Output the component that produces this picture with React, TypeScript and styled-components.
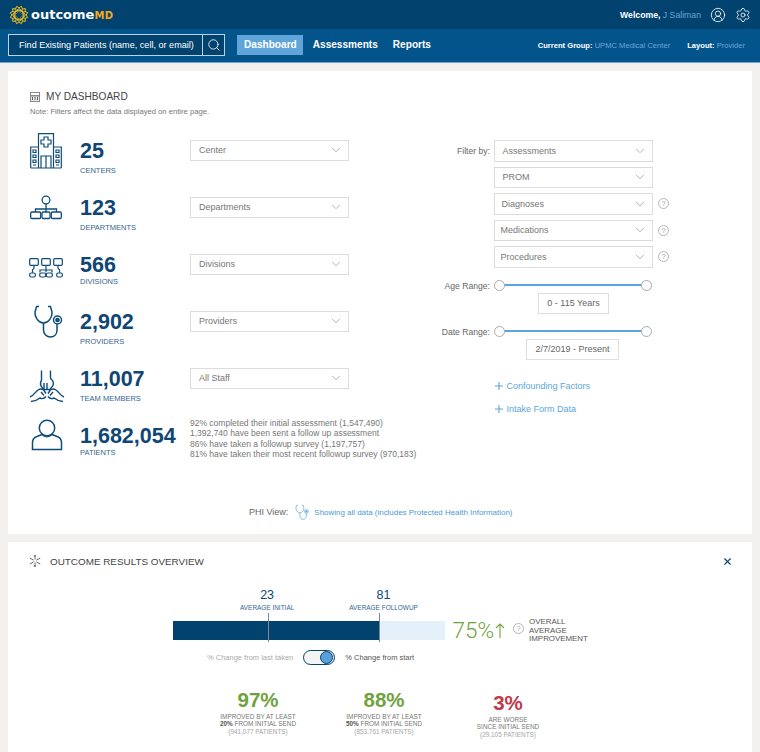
import React from 'react'
import styled, { createGlobalStyle } from 'styled-components'
import { ChevronDown, CircleUserRound, Search, Settings, X } from 'lucide-react'

const Global = createGlobalStyle`
	html, body {
		margin: 0;
		height: 752px;
		overflow: hidden;
		background: #f2f1ef;
		font-family: "Liberation Sans", Arial, sans-serif;
	}
	* { box-sizing: border-box; }
`

const TopBar = styled.header`
	height: 29px;
	background: #01426f;
	display: flex;
	align-items: center;
	justify-content: space-between;
	padding: 0 9px;
	color: #fff;
`
const Logo = styled.div`
	display: flex;
	align-items: center;
	gap: 2px;
`
const LogoWord = styled.span`
	font-family: "DejaVu Sans", sans-serif;
	font-weight: 700;
	font-size: 13px;
	color: #fff;
`
const LogoMd = styled.span`
	color: #f3a81d;
	font-size: 10px;
	letter-spacing: 0.4px;
`
const Account = styled.div`
	display: flex;
	align-items: center;
	font-size: 8.7px;
	font-weight: 700;
	svg { margin-left: 9px; }
`
const Accent = styled.span`
	color: #6ba6d6;
	font-weight: 400;
`
const NavBar = styled.nav`
	height: 34px;
	background: #04548c;
	border-bottom: 1px solid #6ba6d6;
	display: flex;
	align-items: center;
	padding: 0 15px 1px 8px;
	color: #fff;
`
const SearchBox = styled.div`
	width: 217px;
	height: 22px;
	border: 1px solid #b9d2e6;
	background: #01426f;
	display: flex;
	align-items: center;
	justify-content: space-between;
	padding-left: 10px;
	font-size: 9.1px;
`
const SearchButton = styled.span`
	width: 22px;
	height: 20px;
	border-left: 1px solid #b9d2e6;
	display: flex;
	align-items: center;
	justify-content: center;
`
const NavLinks = styled.div`
	display: flex;
	align-items: center;
	margin-left: 12px;
`
const NavLink = styled.a<{ $active?: boolean }>`
	height: 20px;
	line-height: 20px;
	padding: 0 ${p => (p.$active ? 6 : 7)}px 0 7px;
	margin-right: ${p => (p.$active ? 3 : 1)}px;
	font-size: 10.1px;
	font-weight: 700;
	color: #fff;
	background: ${p => (p.$active ? '#5fa5d9' : 'transparent')};
`
const Context = styled.div`
	margin-left: auto;
	display: flex;
	gap: 17px;
	font-size: 7.6px;
	font-weight: 700;
`

const Page = styled.main`
	padding: 8px 8px 0;
	display: flex;
	flex-direction: column;
	gap: 8px;
`
const Card = styled.section`
	background: #fff;
	height: ${(p: { $height: number }) => p.$height}px;
`
const Dashboard = styled(Card)`
	padding: 19px 22px 0;
`
const Title = styled.h2`
	margin: 0;
	display: flex;
	align-items: center;
	gap: 6px;
	font-size: 10.1px;
	font-weight: 400;
	height: 13px;
	color: #444;
`
const Note = styled.p`
	margin: 4px 0 0;
	font-size: 7.65px;
	line-height: 9px;
	color: #777;
`
const Columns = styled.div`
	margin-top: 17px;
	display: flex;
`
const Stats = styled.div`
	width: 402px;
	display: grid;
	grid-auto-rows: 57px;
`
const StatRow = styled.div`
	display: grid;
	grid-template-columns: 50px 110px 1fr;
`
const StatIcon = styled.div<{ $shift?: number }>`
	color: #0f4c7a;
	display: flex;
	padding-left: ${p => p.$shift ?? 0}px;
`
const StatBlock = styled.div`
	padding-top: 7px;
`
const StatNumber = styled.div`
	font-size: 21.5px;
	line-height: 22px;
	font-weight: 700;
	color: #0f4673;
`
const StatLabel = styled.div<{ $tight?: boolean }>`
	font-size: 7.5px;
	line-height: 9px;
	margin-top: ${p => (p.$tight ? 1 : 3.5)}px;
	color: #33668f;
`
const SelectBox = styled.div<{ $inset?: number }>`
	width: 159px;
	height: 21.5px;
	background: #fff;
	border: 1px solid #dcdcdc;
	display: flex;
	align-items: center;
	justify-content: space-between;
	padding: 0 5px 0 ${p => p.$inset ?? 8}px;
	font-size: 9px;
	color: #777;
	svg { color: #777; }
`
const StatSelect = styled(SelectBox)`
	margin-top: 6.5px;
`
const Completion = styled.ul`
	list-style: none;
	margin: 0;
	padding: 0;
	font-size: 8.5px;
	line-height: 10.3px;
	color: #777;
`
const Filters = styled.div`
	flex: 1;
	padding-top: 7px;
`
const FilterRow = styled.div`
	display: flex;
	align-items: center;
	height: 21.5px;
	margin-bottom: 5px;
`
const FieldLabel = styled.div`
	width: 61.5px;
	text-align: right;
	padding-right: 3.5px;
	font-size: 8.6px;
	color: #666;
`
const Help = styled.span`
	display: inline-flex;
	align-items: center;
	justify-content: center;
	flex: none;
	width: 11px;
	height: 11px;
	border: 1px solid #b5b5b5;
	border-radius: 50%;
	font-size: 7.5px;
	color: #a5a5a5;
`
const FilterHelp = styled(Help)`
	margin-left: 5.5px;
`
const RangeRow = styled.div<{ $top: number }>`
	display: flex;
	align-items: flex-start;
	margin-top: ${p => p.$top}px;
`
const RangeLabel = styled(FieldLabel)`
	line-height: 12px;
`
const RangeBody = styled.div`
	width: 158px;
	display: flex;
	flex-direction: column;
	align-items: center;
`
const Track = styled.div`
	position: relative;
	width: 100%;
	height: 11px;
	&::before {
		content: '';
		position: absolute;
		left: 4px;
		right: 4px;
		top: 4.5px;
		height: 2px;
		background: #5aa6dc;
	}
`
const Handle = styled.span<{ $side: 'left' | 'right' }>`
	position: absolute;
	top: 0;
	${p => p.$side}: 0;
	width: 11px;
	height: 11px;
	background: #fff;
	border: 1px solid #aaa;
	border-radius: 50%;
`
const RangeValue = styled.div<{ $pad: number; $nudge?: number }>`
	margin: 2px 0 0 ${p => p.$nudge ?? 0}px;
	height: 21px;
	line-height: 19px;
	padding: 0 ${p => p.$pad}px;
	border: 1px solid #dedede;
	font-size: 9px;
	color: #666;
`
const PlusLink = styled.a<{ $top: number }>`
	display: flex;
	align-items: center;
	gap: 4px;
	margin: ${p => p.$top}px 0 0 62.5px;
	height: 12px;
	font-size: 9px;
	color: #5aa6dc;
`
const PhiRow = styled.div`
	margin: 28px 0 0 219px;
	display: flex;
	align-items: center;
	height: 18px;
	font-size: 9px;
	color: #666;
`
const PhiIcon = styled.span`
	display: flex;
	margin: 0 5px 0 7px;
	color: #5aa6dc;
`
const PhiLink = styled.a`
	font-size: 7.95px;
	color: #4c9ad6;
`

const Overview = styled(Card)`
	padding: 12px 0 0;
`
const OverviewHead = styled.div`
	display: flex;
	align-items: center;
	justify-content: space-between;
	height: 14px;
	padding: 0 19px 0 21px;
`
const OverviewTitle = styled.h2`
	margin: 0;
	display: flex;
	align-items: center;
	gap: 9px;
	font-size: 9.9px;
	font-weight: 400;
	color: #444;
`
const Markers = styled.div`
	margin: 20px 0 0 232px;
	display: flex;
	gap: 55px;
`
const Marker = styled.div`
	text-align: center;
	color: #0f4673;
`
const MarkerValue = styled.div`
	font-size: 12.5px;
	line-height: 15px;
`
const MarkerLabel = styled.div`
	font-size: 6.45px;
	line-height: 8px;
	color: #33668f;
	margin-top: 1px;
`
const BarRow = styled.div`
	margin: 4px 0 0 165px;
	display: flex;
	align-items: center;
`
const Bar = styled.div`
	position: relative;
	width: 272px;
	height: 19px;
	background: #e4f0fa;
`
const BarFill = styled.div`
	height: 100%;
	background: #01426f;
`
const Tick = styled.span`
	position: absolute;
	top: -8px;
	width: 1px;
	height: 29px;
	background: #7a8b98;
`
const Improvement = styled.div`
	display: flex;
	align-items: center;
	margin-left: 7.5px;
	font-family: Roboto, "Liberation Sans", sans-serif;
	font-weight: 300;
	font-size: 22.5px;
	color: #6fa23c;
`
const ImprovementHelp = styled(Help)`
	margin: 0 5px 3px 8px;
	font-family: "Liberation Sans", sans-serif;
`
const ImprovementLabel = styled.div`
	font-family: "Liberation Sans", sans-serif;
	font-weight: 400;
	font-size: 7.9px;
	line-height: 8.7px;
	margin-top: 2px;
	color: #555;
`
const ToggleRow = styled.div`
	margin: 5.5px 0 0 199px;
	display: flex;
	align-items: center;
	font-size: 7.5px;
	color: #aaa;
`
const Toggle = styled.span`
	position: relative;
	width: 32px;
	height: 15px;
	margin: 0 10px 0 10px;
	background: #f4f4f4;
	border: 1px solid #01426f;
	border-radius: 8px;
`
const Knob = styled.span`
	position: absolute;
	right: 1px;
	top: 0;
	width: 13px;
	height: 13px;
	background: #5aa0d8;
	border: 1px solid #01426f;
	border-radius: 50%;
`
const ToggleOn = styled.span`
	color: #555;
`
const Results = styled.div`
	margin: 24px 0 0 187px;
	display: grid;
	grid-template-columns: 126px 126px 122px;
`
const Result = styled.div<{ $drop?: number }>`
	text-align: center;
	padding-top: ${p => p.$drop ?? 0}px;
	font-size: 6.4px;
	line-height: 7.8px;
	color: #777;
	b { color: #555; }
`
const ResultValue = styled.div<{ $tone: 'good' | 'bad' }>`
	font-size: 20.5px;
	line-height: 22px;
	font-weight: 700;
	margin-bottom: 2px;
	color: ${p => (p.$tone === 'good' ? '#6fa23c' : '#bf3a4a')};
`
const ResultCount = styled.div`
	color: #a5a5a5;
`

const Sunburst = () => (
	<svg width="20" height="20" viewBox="-10 -10 20 20">
		{Array.from({ length: 12 }, (_, i) => {
			const a = (i * Math.PI) / 6
			const b = a + Math.PI / 12
			return (
				<g key={i} stroke="#f5c21f" strokeWidth="1" fill="#f5c21f">
					<line x1={Math.cos(a) * 3} y1={Math.sin(a) * 3} x2={Math.cos(a) * 7} y2={Math.sin(a) * 7} />
					<line x1={Math.cos(a) * 7} y1={Math.sin(a) * 7} x2={Math.cos(b) * 9} y2={Math.sin(b) * 9} />
					<line x1={Math.cos(a) * 7} y1={Math.sin(a) * 7} x2={Math.cos(a - Math.PI / 12) * 9} y2={Math.sin(a - Math.PI / 12) * 9} />
					<circle cx={Math.cos(b) * 5} cy={Math.sin(b) * 5} r="0.6" />
				</g>
			)
		})}
	</svg>
)

const DashIcon = () => (
	<svg width="10" height="10" viewBox="0 0 10 10">
		<rect width="10" height="10" fill="#8a8a8a" />
		<rect x="1" y="1" width="8" height="2" fill="#fff" />
		<rect x="1" y="4.500" width="8" height="4.500" fill="#e8e8e8" />
		<path d="M2 5h1v3H2zM4.500 5h1v3h-1zM7 5h1v3H7z" fill="#666" />
	</svg>
)

const Hospital = () => (
	<svg width="32" height="36" viewBox="0 0 32 36" fill="none" stroke="currentColor" strokeWidth="1.2">
		<path d="M8.500 35V.7h15V35M.7 35V14h7.800M31.300 35V14h-7.800M.7 35h30.600" />
		<path d="M14 4h4v3h3v4h-3v3h-4v-3h-3V7h3z" />
		<path d="M11 35V23h10v12M16 23v12" />
		<path d="M3 17h3v2.500H3zM3 22h3v2.500H3zM3 27h3v2.500H3zM26 17h3v2.500h-3zM26 22h3v2.500h-3zM26 27h3v2.500h-3zM3 32h3M26 32h3" />
	</svg>
)

const OrgChart = () => (
	<svg width="32" height="26" viewBox="0 0 32 26" fill="none" stroke="currentColor" strokeWidth="1.3" style={{ marginTop: 5 }}>
		<circle cx="16" cy="5" r="3.900" />
		<path d="M16 9v5M5.500 17v-3h21v3M16 14v3" />
		<rect x=".7" y="17" width="10" height="6.500" rx="1.200" />
		<rect x="12" y="17" width="8" height="6.500" rx="1.200" />
		<rect x="21.300" y="17" width="10" height="6.500" rx="1.200" />
	</svg>
)

const DivisionChart = () => (
	<svg width="34" height="20" viewBox="0 0 34 20" fill="none" stroke="currentColor" strokeWidth="1.2" style={{ margin: '11px 0 0 -1px' }}>
		<rect x=".7" y=".7" width="8.600" height="6.600" rx="1" />
		<rect x="12.700" y=".7" width="8.600" height="6.600" rx="1" />
		<rect x="24.700" y=".7" width="8.600" height="6.600" rx="1" />
		<path d="M5 7.300v3l-1.500 1.500v3M17 7.300v7M11 14.500v-2.500h12v2.500M29 7.300v3l1.500 1.500v3" />
		<rect x=".7" y="15" width="5.600" height="4" rx="1.500" />
		<rect x="10.700" y="15" width="6" height="4" rx="1.500" />
		<rect x="17.300" y="15" width="6" height="4" rx="1.500" />
		<rect x="27.700" y="15" width="5.600" height="4" rx="1.500" />
	</svg>
)

const Stethoscope = ({ size = 30 }: { size?: number }) => (
	<svg width={size} height={(size * 34) / 30} viewBox="0 0 30 34" fill="none" stroke="currentColor" strokeWidth="1.5" style={{ flex: 'none' }}>
		<path d="M6 2.500H3.600L2 8c-.6 5 3.500 11 8.500 11s9-6 8.500-11l-1.600-5.500H15" />
		<path d="M10.500 19v7c0 4 3 7 7 7s6.500-3 6.500-7v-6" />
		<circle cx="24.500" cy="16" r="4" />
		<circle cx="24.500" cy="16" r="1.600" fill="currentColor" />
	</svg>
)

const Hands = () => (
	<svg width="36" height="33" viewBox="0 0 36 33" fill="none" stroke="currentColor" strokeWidth="1.4" style={{ margin: '9px 0 0 -1px' }}>
		<path d="M12.500 .5V10c-1 2-1.500 4-.5 6l2.500 3.500h6.500l3-4c.8-2.500 0-5-2-6.500l-.5-1V.5" />
		<path d="M15 13v6M18 13v6.500" />
		<path d="M1 27c3.500-1 5-5 8-7 2-1.200 4.500-1 6 .5l2 3" />
		<path d="M35 27c-3.500-1-5-5-8-7-2-1.200-4.500-1-6 .5l-2 3" />
		<path d="M2 31.500c4-.2 6.500-1.500 9-3.500 2 1 4.500.5 6-1.500M34 31.500c-4-.2-6.500-1.500-9-3.500-2 1-4.500.5-6-1.500" />
		<path d="M12 22l3 3.500M21 25.500l3-3.500" />
	</svg>
)

const Person = () => (
	<svg width="32" height="32" viewBox="0 0 32 32" fill="none" stroke="currentColor" strokeWidth="1.500" style={{ marginLeft: 1, marginTop: 1 }}>
		<circle cx="16" cy="9" r="7.700" />
		<path d="M11 15.500 6 17.500c-3 1-4.500 3.500-4.500 6v7h29v-7c0-2.500-1.500-5-4.500-6l-5-2c-3 3-7 3-10 0z" />
	</svg>
)

const Asterisk = () => (
	<svg width="12" height="12" viewBox="0 0 12 12" fill="none" stroke="#666" strokeWidth="1">
		<path d="M6 0v4.500M6 7.500V12M.8 3l3.900 2.200M7.300 6.800 11.200 9M.8 9l3.900-2.200M7.300 5.200 11.200 3" />
		<path d="M4.800 1h2.400M4.800 11h2.400" />
	</svg>
)

const Plus = () => (
	<svg width="8" height="8" viewBox="0 0 8 8" stroke="#5aa6dc" strokeWidth="1.100">
		<path d="M4 0v8M0 4h8" />
	</svg>
)

const UpArrow = () => (
	<svg width="10" height="15" viewBox="0 0 10 15" fill="none" stroke="#6fa23c" strokeWidth="1.100" style={{ marginLeft: 1 }}>
		<path d="M5 15V1M1 5l4-4 4 4" />
	</svg>
)

const stats = [
	{ icon: <Hospital />, value: '25', label: 'CENTERS', select: 'Center' },
	{ icon: <OrgChart />, value: '123', label: 'DEPARTMENTS', select: 'Departments' },
	{ icon: <DivisionChart />, value: '566', label: 'DIVISIONS', select: 'Divisions', tight: true },
	{ icon: <Stethoscope />, value: '2,902', label: 'PROVIDERS', select: 'Providers', shift: 3 },
	{ icon: <Hands />, value: '11,007', label: 'TEAM MEMBERS', select: 'All Staff' },
]

const filters = [
	{ name: 'Assessments', label: 'Filter by:', inset: 8 },
	{ name: 'PROM', inset: 8 },
	{ name: 'Diagnoses', help: true, inset: 7 },
	{ name: 'Medications', help: true, inset: 6 },
	{ name: 'Procedures', help: true, inset: 6 },
]

const Chevron = () => <ChevronDown size={14} strokeWidth={1} />

export default function App() {
	return (
		<>
			<Global />
			<TopBar>
				<Logo>
					<Sunburst />
					<LogoWord>
						outcome<LogoMd>MD</LogoMd>
					</LogoWord>
				</Logo>
				<Account>
					Welcome,&nbsp;<Accent>J Saliman</Accent>
					<CircleUserRound size={16} strokeWidth={1.2} />
					<Settings size={16} strokeWidth={1.2} />
				</Account>
			</TopBar>
			<NavBar>
				<SearchBox>
					Find Existing Patients (name, cell, or email)
					<SearchButton>
						<Search size={14} strokeWidth={1.4} />
					</SearchButton>
				</SearchBox>
				<NavLinks>
					<NavLink $active>Dashboard</NavLink>
					<NavLink>Assessments</NavLink>
					<NavLink>Reports</NavLink>
				</NavLinks>
				<Context>
					<span>
						Current Group: <Accent>UPMC Medical Center</Accent>
					</span>
					<span>
						Layout: <Accent>Provider</Accent>
					</span>
				</Context>
			</NavBar>
			<Page>
				<Dashboard $height={463}>
					<Title>
						<DashIcon />
						MY DASHBOARD
					</Title>
					<Note>Note: Filters affect the data displayed on entire page.</Note>
					<Columns>
						<Stats>
							{stats.map(s => (
								<StatRow key={s.label}>
									<StatIcon $shift={s.shift}>{s.icon}</StatIcon>
									<StatBlock>
										<StatNumber>{s.value}</StatNumber>
										<StatLabel $tight={s.tight}>{s.label}</StatLabel>
									</StatBlock>
									<StatSelect>
										{s.select}
										<Chevron />
									</StatSelect>
								</StatRow>
							))}
							<StatRow>
								<StatIcon>
									<Person />
								</StatIcon>
								<StatBlock>
									<StatNumber>1,682,054</StatNumber>
									<StatLabel $tight>PATIENTS</StatLabel>
								</StatBlock>
								<Completion>
									<li>92% completed their initial assessment (1,547,490)</li>
									<li>1,392,740 have been sent a follow up assessment</li>
									<li>86% have taken a followup survey (1,197,757)</li>
									<li>81% have taken their most recent followup survey (970,183)</li>
								</Completion>
							</StatRow>
						</Stats>
						<Filters>
							{filters.map(f => (
								<FilterRow key={f.name}>
									<FieldLabel>{f.label}</FieldLabel>
									<SelectBox $inset={f.inset}>
										{f.name}
										<Chevron />
									</SelectBox>
									{f.help && <FilterHelp>?</FilterHelp>}
								</FilterRow>
							))}
							<RangeRow $top={12}>
								<RangeLabel>Age Range:</RangeLabel>
								<RangeBody>
									<Track>
										<Handle $side="left" />
										<Handle $side="right" />
									</Track>
									<RangeValue $pad={8} $nudge={2}>0 - 115 Years</RangeValue>
								</RangeBody>
							</RangeRow>
							<RangeRow $top={12}>
								<RangeLabel>Date Range:</RangeLabel>
								<RangeBody>
									<Track>
										<Handle $side="left" />
										<Handle $side="right" />
									</Track>
									<RangeValue $pad={8.5}>2/7/2019 - Present</RangeValue>
								</RangeBody>
							</RangeRow>
							<PlusLink $top={20}>
								<Plus />
								Confounding Factors
							</PlusLink>
							<PlusLink $top={11}>
								<Plus />
								Intake Form Data
							</PlusLink>
						</Filters>
					</Columns>
					<PhiRow>
						PHI View:
						<PhiIcon>
							<Stethoscope size={14} />
						</PhiIcon>
						<PhiLink>Showing all data (includes Protected Health Information)</PhiLink>
					</PhiRow>
				</Dashboard>
				<Overview $height={210}>
					<OverviewHead>
						<OverviewTitle>
							<Asterisk />
							OUTCOME RESULTS OVERVIEW
						</OverviewTitle>
						<X size={11} strokeWidth={2.5} color="#0f4673" />
					</OverviewHead>
					<Markers>
						<Marker>
							<MarkerValue>23</MarkerValue>
							<MarkerLabel>AVERAGE INITIAL</MarkerLabel>
						</Marker>
						<Marker>
							<MarkerValue>81</MarkerValue>
							<MarkerLabel>AVERAGE FOLLOWUP</MarkerLabel>
						</Marker>
					</Markers>
					<BarRow>
						<Bar>
							<BarFill style={{ width: `${(206 / 272) * 100}%` }} />
							<Tick style={{ left: '35%' }} />
							<Tick style={{ left: `${(206 / 272) * 100}%` }} />
						</Bar>
						<Improvement>
							75%
							<UpArrow />
							<ImprovementHelp>?</ImprovementHelp>
							<ImprovementLabel>
								OVERALL
								<br />
								AVERAGE
								<br />
								IMPROVEMENT
							</ImprovementLabel>
						</Improvement>
					</BarRow>
					<ToggleRow>
						% Change from last taken
						<Toggle>
							<Knob />
						</Toggle>
						<ToggleOn>% Change from start</ToggleOn>
					</ToggleRow>
					<Results>
						<Result>
							<ResultValue $tone="good">97%</ResultValue>
							IMPROVED BY AT LEAST
							<br />
							<b>20%</b> FROM INITIAL SEND
							<ResultCount>(941,077 PATIENTS)</ResultCount>
						</Result>
						<Result>
							<ResultValue $tone="good">88%</ResultValue>
							IMPROVED BY AT LEAST
							<br />
							<b>50%</b> FROM INITIAL SEND
							<ResultCount>(853,761 PATIENTS)</ResultCount>
						</Result>
						<Result $drop={3}>
							<ResultValue $tone="bad">3%</ResultValue>
							ARE WORSE
							<br />
							SINCE INITIAL SEND
							<ResultCount>(29,105 PATIENTS)</ResultCount>
						</Result>
					</Results>
				</Overview>
			</Page>
		</>
	)
}
